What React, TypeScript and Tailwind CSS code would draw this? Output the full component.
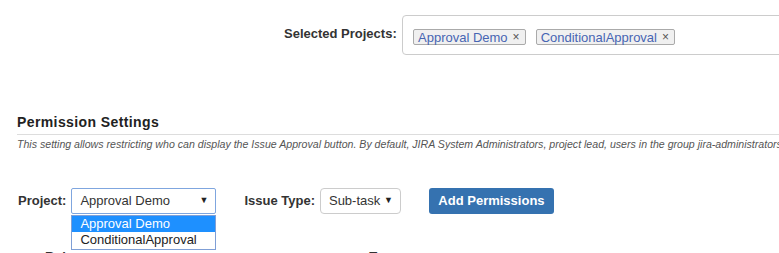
const App = () => {
    return (
        <div className="relative w-[779px] h-[253px] overflow-hidden bg-white text-[#333] font-['Liberation_Sans',Arial,sans-serif]">
            <div className="flex items-center pt-[15px] pl-[284px]">
                <label className="w-[118px] shrink-0 whitespace-nowrap text-[13px] font-bold text-[#333] mb-[3px]">Selected Projects:</label>
                <div className="flex items-start gap-[10px] w-[420px] h-[40px] shrink-0 border border-[#ccc] rounded-[4px] pl-[10px] pt-[13px]">
                    <span className="flex items-center h-[16px] border border-[#aaa] rounded-[2px] bg-[#f0f0f0] pl-[4px] pr-[5px] text-[13px] leading-none text-[#4765b3]">
                        Approval Demo
                        <span className="ml-[5px] text-[12px] text-[#555]">×</span>
                    </span>
                    <span className="flex items-center h-[16px] border border-[#aaa] rounded-[2px] bg-[#f0f0f0] pl-[4px] pr-[5px] text-[13px] leading-none text-[#4765b3]">
                        ConditionalApproval
                        <span className="ml-[5px] text-[12px] text-[#555]">×</span>
                    </span>
                </div>
            </div>

            <div className="mt-[58px] pl-[17px]">
                <h3 className="text-[14px] font-bold tracking-[0.4px] leading-[18px] text-[#222]">Permission Settings</h3>
                <div className="mt-[3px] border-t border-[#ddd]"></div>
                <p className="mt-[3px] text-[10.6px] italic text-[#555] whitespace-nowrap leading-[13px]">
                    This setting allows restricting who can display the Issue Approval button. By default, JIRA System Administrators, project lead, users in the group jira-administrators
                </p>
            </div>

            <div className="flex items-center mt-[37px] pl-[18px]">
                <label className="text-[13px] font-bold text-[#333] mr-[5px]">Project:</label>
                <div className="relative">
                    <div className="flex items-center justify-between w-[145px] h-[26px] border border-[#7fa6df] rounded-[2px] pl-[8px] pr-[7px] text-[13px] text-[#333]">
                        <span>Approval Demo</span>
                        <span className="text-[9px] text-[#222]">▼</span>
                    </div>
                    <div className="absolute left-0 top-[27px] z-10 w-[145px] border border-[#7f9fd6] bg-white text-[13px] leading-[16px]">
                        <div className="bg-[#1e90ff] text-white pl-[8px]">Approval Demo</div>
                        <div className="text-[#222] pl-[8px] pb-[1px]">ConditionalApproval</div>
                    </div>
                </div>
                <label className="ml-[28px] text-[13px] font-bold text-[#333] mr-[5px]">Issue Type:</label>
                <div className="flex items-center justify-between w-[81px] h-[26px] border border-[#ccc] rounded-[4px] pl-[8px] pr-[7px] text-[13px] text-[#333]">
                    <span>Sub-task</span>
                    <span className="text-[9px] text-[#222]">▼</span>
                </div>
                <button className="ml-[28px] w-[125px] h-[26px] rounded-[3px] bg-[#3572b0] text-white text-[13px] font-bold">Add Permissions</button>
            </div>

            <div className="flex mt-[33px] text-[13px] font-bold text-[#333]">
                <span className="pl-[45px]">Role</span>
                <span className="pl-[296px]">Type</span>
            </div>
        </div>
    )
}

export default App
